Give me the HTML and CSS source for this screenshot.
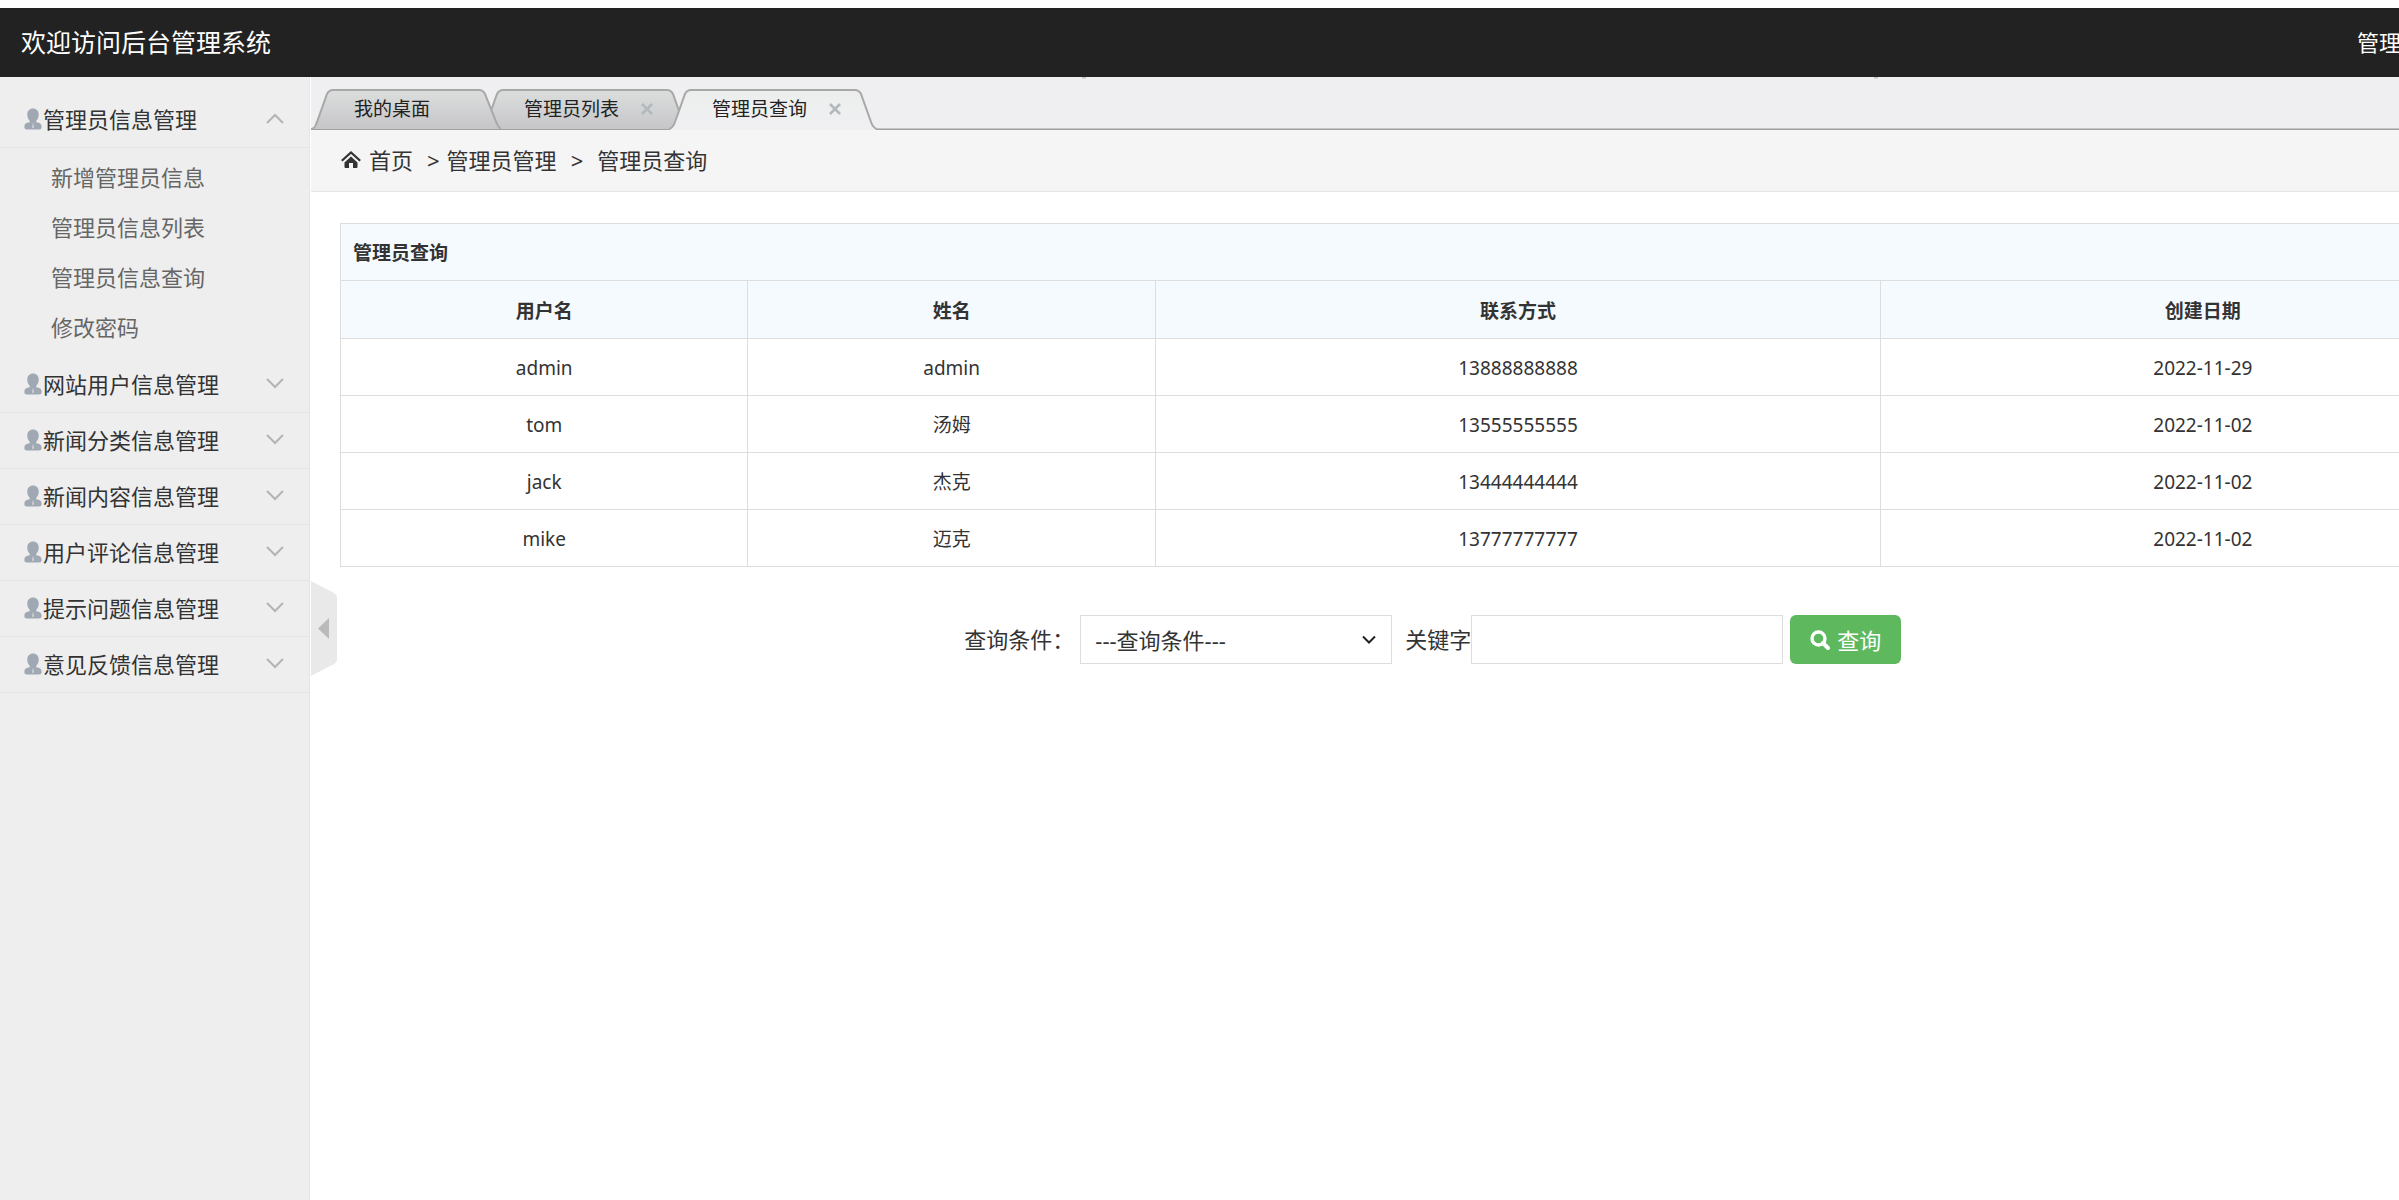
FILE: index.html
```html
<!DOCTYPE html>
<html lang="zh-CN">
<head>
<meta charset="utf-8">
<title>后台管理系统</title>
<link rel="stylesheet" href="styles.css">
</head>
<body>
<svg class="defs" width="0" height="0" aria-hidden="true">
  <defs>
    <linearGradient id="tab-grey" x1="0" y1="0" x2="0" y2="1"><stop offset="0" stop-color="#dcdedd"/><stop offset="1" stop-color="#c6c6c9"/></linearGradient>
    <linearGradient id="tab-light" x1="0" y1="0" x2="0" y2="1"><stop offset="0" stop-color="#eceeed"/><stop offset="1" stop-color="#f0f0f2"/></linearGradient>
    <symbol id="user" viewBox="0 0 18 22"><path fill="#a0a8b3" d="M9 0.500C12.500 .5 14.700 3 14.700 6.500c0 3-1.100 5-2.400 6.300v1.500c3.200.5 5.300 1.300 5.300 4.700 0 1.700-.9 2.500-2.500 2.500H2.900C1.300 21.500.4 20.700.4 19c0-3.400 2.100-4.200 5.300-4.700v-1.500C4.400 11.500 3.300 9.500 3.300 6.500 3.300 3 5.500 .5 9 .5z"/><path fill="#dfe3e3" d="M8.500 15.500h1l-.2 1.200.5 2.600-.8.900-.8-.9.500-2.600z"/></symbol>
    <symbol id="down" viewBox="0 0 18 11"><path d="M1 1l8 8 8-8" fill="none" stroke="#b4b4b4" stroke-width="2"/></symbol>
    <symbol id="close" viewBox="0 0 12 12"><path d="M1 1l10 10M11 1L1 11" fill="none" stroke="#b4b9bd" stroke-width="2.600"/></symbol>
  </defs>
</svg>
<header class="header">
  <h1 class="brand">欢迎访问后台管理系统</h1>
  <span class="role">管理</span>
</header>
<div class="shell">
  <nav class="side">
    <button class="group" type="button"><svg class="user"><use href="#user"/></svg><span>管理员信息管理</span><svg class="arrow open"><use href="#down"/></svg></button>
    <ul class="sub">
      <li><a href="#">新增管理员信息</a></li>
      <li><a href="#">管理员信息列表</a></li>
      <li><a href="#">管理员信息查询</a></li>
      <li><a href="#">修改密码</a></li>
    </ul>
    <button class="group" type="button"><svg class="user"><use href="#user"/></svg><span>网站用户信息管理</span><svg class="arrow"><use href="#down"/></svg></button>
    <button class="group" type="button"><svg class="user"><use href="#user"/></svg><span>新闻分类信息管理</span><svg class="arrow"><use href="#down"/></svg></button>
    <button class="group" type="button"><svg class="user"><use href="#user"/></svg><span>新闻内容信息管理</span><svg class="arrow"><use href="#down"/></svg></button>
    <button class="group" type="button"><svg class="user"><use href="#user"/></svg><span>用户评论信息管理</span><svg class="arrow"><use href="#down"/></svg></button>
    <button class="group" type="button"><svg class="user"><use href="#user"/></svg><span>提示问题信息管理</span><svg class="arrow"><use href="#down"/></svg></button>
    <button class="group" type="button"><svg class="user"><use href="#user"/></svg><span>意见反馈信息管理</span><svg class="arrow"><use href="#down"/></svg></button>
  </nav>
  <main class="main">
    <div class="tabs">
      <div class="tab first">
        <svg class="shape" viewBox="0 0 190 41"><path d="M0 40C5 39 4 37 6 33L16 5Q18 1 22 1H168Q172 1 174 5L186 35Q188 39 190 40z" fill="url(#tab-grey)"/><path d="M0 40C5 39 4 37 6 33L16 5Q18 1 22 1H168Q172 1 174 5L186 35Q188 39 190 40" fill="none" stroke="#a8a8a8" stroke-width="2"/></svg>
        <a href="#">我的桌面</a>
      </div>
      <div class="tab">
        <svg class="shape" viewBox="0 0 208 41"><path d="M0 40Q4 39 6 33L16 5Q18 1 22 1H186Q190 1 192 5L202 33Q204 39 208 40z" fill="url(#tab-grey)"/><path d="M0 40Q4 39 6 33L16 5Q18 1 22 1H186Q190 1 192 5L202 33Q204 39 208 40" fill="none" stroke="#a8a8a8" stroke-width="2"/></svg>
        <a href="#">管理员列表</a>
        <button class="close" type="button" aria-label="关闭"><svg><use href="#close"/></svg></button>
      </div>
      <div class="tab current">
        <svg class="shape" viewBox="0 0 208 41"><path d="M0 41Q4 39 6 33L16 5Q18 1 22 1H186Q190 1 192 5L202 33Q204 39 208 41z" fill="url(#tab-light)"/><path d="M0 40Q4 39 6 33L16 5Q18 1 22 1H186Q190 1 192 5L202 33Q204 39 208 40" fill="none" stroke="#a8a8a8" stroke-width="2"/></svg>
        <a href="#">管理员查询</a>
        <button class="close" type="button" aria-label="关闭"><svg><use href="#close"/></svg></button>
      </div>
    </div>
    <div class="crumbs">
      <svg class="home" viewBox="0 0 20 17"><path d="M10 5.500l6.500 6V16q0 1-1 1H12v-5H8v5H4.500q-1 0-1-1v-4.500z" fill="#333"/><path d="M.8 9.800L10 1.500l9.200 8.300" fill="none" stroke="#333" stroke-width="2.200"/></svg>
      <a href="#">首页</a><span class="sep">&gt;</span><a href="#">管理员管理</a><span class="sep wide">&gt;</span><span>管理员查询</span>
    </div>
    <div class="content">
      <table class="grid">
        <colgroup><col class="c-name"><col class="c-name"><col class="c-phone"><col></colgroup>
        <thead>
          <tr><th class="title" colspan="4">管理员查询</th></tr>
          <tr class="heads"><th>用户名</th><th>姓名</th><th>联系方式</th><th>创建日期</th></tr>
        </thead>
        <tbody>
          <tr><td>admin</td><td>admin</td><td>13888888888</td><td>2022-11-29</td></tr>
          <tr><td>tom</td><td>汤姆</td><td>13555555555</td><td>2022-11-02</td></tr>
          <tr><td>jack</td><td>杰克</td><td>13444444444</td><td>2022-11-02</td></tr>
          <tr><td>mike</td><td>迈克</td><td>13777777777</td><td>2022-11-02</td></tr>
        </tbody>
      </table>
      <form class="search">
        <label for="cond">查询条件：</label>
        <div class="pick">
          <select id="cond"><option>---查询条件---</option></select>
          <svg class="caret" viewBox="0 0 14 10"><path d="M1 1.500l6 6 6-6" fill="none" stroke="#222" stroke-width="2"/></svg>
        </div>
        <label for="word">关键字</label>
        <input id="word" type="text">
        <button class="go" type="button"><svg class="lens" viewBox="0 0 20 20"><circle cx="8.500" cy="8.500" r="6.500" fill="none" stroke="#fff" stroke-width="3.400"/><path d="M13 13l5 5" stroke="#fff" stroke-width="4" stroke-linecap="round"/></svg>查询</button>
      </form>
    </div>
    <button class="fold" type="button" aria-label="收起菜单"><svg viewBox="0 0 26 95"><path d="M0 0L23 12Q26 14 26 16V79Q26 81 23 83L0 95z" fill="#e9e9e9"/><path d="M7 47.500L18 37v21z" fill="#bababa"/></svg></button>
  </main>
</div>
</body>
</html>
```
FILE: styles.css
```css
* { box-sizing: border-box; }
body {
  margin: 0;
  padding-top: 8px;
  min-height: 100vh;
  display: flex;
  flex-direction: column;
  overflow-x: hidden;
  background: #fff;
  color: #333;
  font: 22px/32px "Noto Sans", "Noto Sans CJK SC", sans-serif;
}
button, select, input { font: inherit; color: inherit; margin: 0; }
button { border: 0; background: none; padding: 0; cursor: pointer; }
a { color: inherit; text-decoration: none; }
svg { display: block; flex: none; }
.defs { position: absolute; }

.header {
  display: flex;
  justify-content: space-between;
  align-items: center;
  height: 69px;
  padding: 0 0 2px 21px;
  background: #222;
  color: #fff;
}
.brand { margin: 0; font-size: 25px; font-weight: 400; }
.role { width: 42px; white-space: nowrap; }

.shell { flex: 1; display: flex; }
.side {
  flex: none;
  width: 310px;
  padding-top: 15px;
  background: #eee;
  border-right: 1px solid #e5e5e5;
}
.group {
  display: flex;
  align-items: center;
  width: 100%;
  height: 56px;
  padding: 0 25px 2px 24px;
  border-bottom: 1px solid #e5e5e5;
}
.group span { margin-left: 1px; }
.user { width: 18px; height: 22px; }
.arrow { width: 18px; height: 11px; margin-left: auto; }
.open { transform: rotate(180deg); }
.sub {
  margin: 0;
  padding: 4px 0 5px 51px;
  list-style: none;
  color: #666;
  line-height: 50px;
}

.main { position: relative; flex: 1; min-width: 0; overflow: hidden; padding-left: 1px; }
.tabs {
  display: flex;
  align-items: flex-end;
  height: 53px;
  background:
    linear-gradient(#bbb, #ddd) 37% 0 / 4px 2px no-repeat,
    linear-gradient(#bbb, #ddd) 75% 0 / 4px 2px no-repeat,
    linear-gradient(#c4c4c6 50%, #a0a0a2 50%) bottom / 100% 2px no-repeat #efeff1;
  color: #222;
  font-size: 19px;
}
.tab {
  position: relative;
  display: flex;
  align-items: center;
  justify-content: space-between;
  width: 208px;
  height: 41px;
  margin-left: -20px;
  padding: 0 36px 2px 43px;
}
.first { width: 190px; margin-left: 0; z-index: 1; }
.current { z-index: 2; }
.shape { position: absolute; left: 0; top: 0; width: 100%; height: 100%; }
.tab a, .close { position: relative; }
.close svg { width: 12px; height: 12px; }

.crumbs {
  display: flex;
  align-items: center;
  height: 62px;
  padding: 0 0 2px 30px;
  background: #f5f5f5;
  border-bottom: 1px solid #e5e5e5;
}
.home { width: 20px; height: 17px; margin-right: 8px; }
.sep { margin: 0 7px 0 14px; }
.sep.wide { margin-right: 14px; }

.content { width: 107.500%; padding: 31px 30px 0 29px; }
.grid {
  width: 100%;
  table-layout: fixed;
  border-collapse: collapse;
  font-size: 19px;
  line-height: 28px;
}
.c-name { width: 18.650%; }
.c-phone { width: 33.200%; }
.grid th, .grid td {
  height: 57px;
  padding: 2px 12px 0;
  border: 1px solid #ddd;
  text-align: center;
}
.grid .heads th { height: 58px; }
.grid th { background: #f5fafe; font-weight: 700; }
.grid .title { text-align: left; }

.search {
  display: flex;
  justify-content: center;
  align-items: center;
  margin-top: 48px;
}
.search label { padding-bottom: 2px; }
.pick { position: relative; margin: 0 13px 0 6px; }
.pick select, .search input {
  display: block;
  width: 312px;
  height: 49px;
  padding: 0 14px;
  border: 1px solid #ddd;
  border-radius: 0;
  background: #fff;
  appearance: none;
}
.caret { position: absolute; right: 16px; top: 20px; width: 14px; height: 10px; pointer-events: none; }
.go {
  display: flex;
  align-items: center;
  justify-content: center;
  gap: 7px;
  width: 111px;
  height: 49px;
  margin-left: 7px;
  border-radius: 6px;
  background: #5eb95e;
  color: #fff;
}
.lens { width: 20px; height: 20px; }
.fold { position: absolute; left: 1px; top: 504px; }
.fold svg { width: 26px; height: 95px; }
```
